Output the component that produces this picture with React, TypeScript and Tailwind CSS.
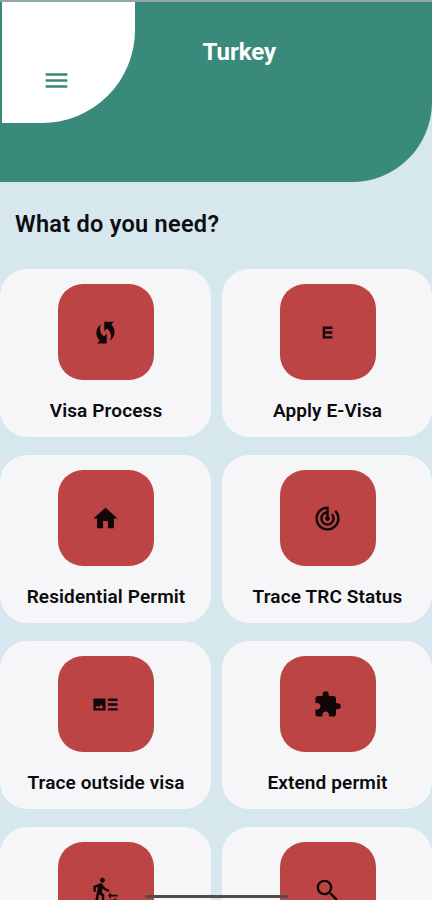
import type { ComponentType } from 'react';
import {
  MdEMobiledata,
  MdExtension,
  MdHome,
  MdMenu,
  MdSearch,
  MdTrackChanges,
  MdTransferWithinAStation,
  MdWifiProtectedSetup,
} from 'react-icons/md';

interface Service {
  label: string;
  icon: ComponentType<{ className?: string }>;
}

// Square-cornered variant of the art track icon
function ArtTrackIcon({ className }: { className?: string }) {
  return (
    <svg viewBox="0 0 24 24" fill="currentColor" className={className}>
      <path d="M22 13h-8v-2h8v2zm0-6h-8v2h8V7zm-8 10h8v-2h-8v2zM12 7v10H2V7h10zm-1.5 8-2.25-3-1.75 2.26-1.25-1.51L3.5 15h7z" />
    </svg>
  );
}

const SERVICES: Service[] = [
  { label: 'Visa Process', icon: MdWifiProtectedSetup },
  { label: 'Apply E-Visa', icon: MdEMobiledata },
  { label: 'Residential Permit', icon: MdHome },
  { label: 'Trace TRC Status', icon: MdTrackChanges },
  { label: 'Trace outside visa', icon: ArtTrackIcon },
  { label: 'Extend permit', icon: MdExtension },
  { label: '', icon: MdTransferWithinAStation },
  { label: '', icon: MdSearch },
];

function ServiceCard({ label, icon: Icon }: Service) {
  return (
    <button className="flex h-[168px] flex-col items-center rounded-[27px] bg-[#f6f6f9] pt-[15px] pl-[1.5px]">
      <span className="flex h-24 w-24 items-center justify-center rounded-[25px] bg-[#bd4445]">
        <Icon className="mr-px h-[29px] w-[29px] text-[#120708]" />
      </span>
      <span className="mt-[19px] whitespace-nowrap text-[19px] leading-6 font-semibold tracking-[0.006em] text-[#0b0b0d]">
        {label}
      </span>
    </button>
  );
}

export default function App() {
  return (
    <div className="relative h-[900px] w-[432px] overflow-hidden bg-[#d6e7ee] font-['Roboto',sans-serif]">
      <header className="flex h-[182px] rounded-br-[80px] border-t-2 border-[#91a5ad] bg-[#3a8a7b] pl-[2px]">
        <div className="h-[121px] w-[132.5px] rounded-br-[93px] bg-white pt-16 pl-10">
          <MdMenu className="h-[29px] w-[29px] text-[#3a8a7b]" />
        </div>
        <h1 className="mt-[35px] ml-[68px] text-2xl leading-[30px] font-bold text-white">Turkey</h1>
      </header>

      <h2 className="mt-[26px] ml-[15px] text-[23.5px] leading-8 font-semibold tracking-[0.012em] text-[#0b0d10]">
        What do you need?
      </h2>

      <main className="mt-[29px] grid grid-cols-2 gap-x-[11px] gap-y-[18px]">
        {SERVICES.map((service, index) => (
          <ServiceCard key={index} {...service} />
        ))}
      </main>

      {/* Home indicator */}
      <div className="absolute bottom-[2px] left-[145px] h-[3px] w-[143px] rounded-full bg-[#514b4e]" />
    </div>
  );
}
